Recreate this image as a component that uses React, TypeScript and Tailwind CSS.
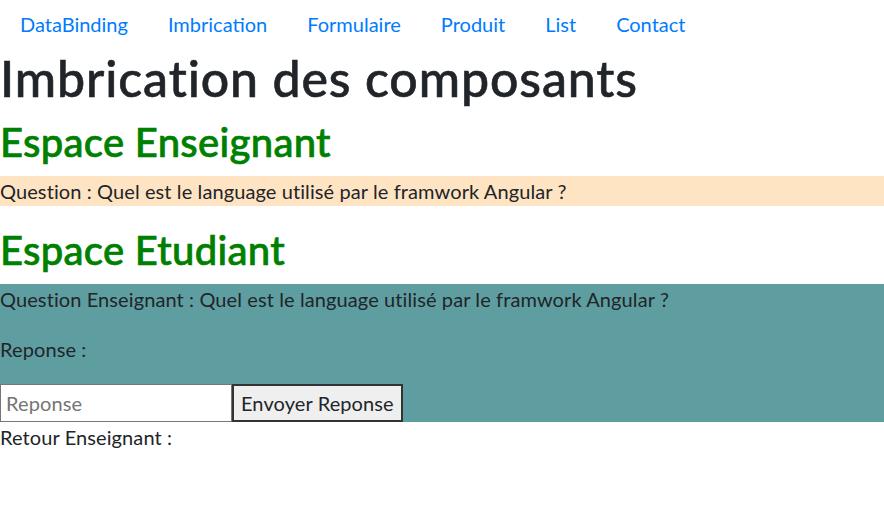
export default function App() {
  const links = ['DataBinding', 'Imbrication', 'Formulaire', 'Produit', 'List', 'Contact'];

  return (
    <div className="min-h-[519px] bg-white text-[#212529] text-[20px] leading-[30px] font-['Lato','Open_Sans',sans-serif]">
      {/* Nav */}
      <ul className="flex">
        {links.map((link) => (
          <li key={link}>
            <a href="#" className="block px-[20px] py-[9px] text-[#007bff]">
              {link}
            </a>
          </li>
        ))}
      </ul>

      <h1 className="text-[50px] leading-[60px] font-medium tracking-[0.9px] [-webkit-text-stroke:0.6px] mb-[10px]">
        Imbrication des composants
      </h1>

      {/* Enseignant */}
      <h2 className="text-[40px] leading-[48px] font-medium tracking-[0.3px] [-webkit-text-stroke:0.7px] text-[#008000] mb-[10px]">
        Espace Enseignant
      </h2>
      <p className="bg-[#ffe4c4] mb-[20px] tracking-[0.1px]">Question : Quel est le language utilisé par le framwork Angular ?</p>

      {/* Etudiant */}
      <h2 className="text-[40px] leading-[48px] font-medium tracking-[0.3px] [-webkit-text-stroke:0.7px] text-[#008000] mb-[10px]">
        Espace Etudiant
      </h2>
      <div className="bg-[#5f9ea0] tracking-[0.1px]">
        <p className="mb-[20px]">Question Enseignant : Quel est le language utilisé par le framwork Angular ?</p>
        <p className="mb-[20px]">Reponse :</p>
        <div className="flex h-[38px]">
          <input
            type="text"
            placeholder="Reponse"
            className="w-[232px] h-[38px] bg-white border border-[#767676] px-[5px] text-[20px] placeholder:text-[#757575] outline-none"
          />
          <button className="h-[38px] px-[7px] bg-[#efefef] border-2 border-[#333] text-[20px]">
            Envoyer Reponse
          </button>
        </div>
      </div>
      <p className="tracking-[0.1px]">Retour Enseignant :</p>
    </div>
  );
}
